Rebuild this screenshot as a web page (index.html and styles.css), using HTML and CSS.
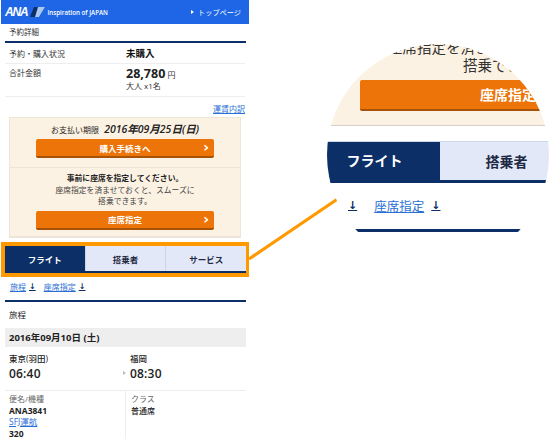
FILE: index.html
```html
<!DOCTYPE html>
<html lang="ja">
<head>
<meta charset="utf-8">
<title>予約詳細</title>
<link rel="stylesheet" href="styles.css">
</head>
<body>
<main class="phone">
  <header class="hdr">
    <div class="logo">
      <span class="ana">ANA</span>
      <svg class="tail" width="15" height="10" viewBox="0 0 15 10"><polygon points="4,0 15,0 9,10 0,10" fill="#0b2f66"/><polygon points="8,0 15,0 9,10 5,10" fill="#a9c8f2"/></svg>
      <span class="insp">Inspiration of JAPAN</span>
    </div>
    <span class="top"><i class="tri"></i>トップページ</span>
  </header>
  <h1 class="title">予約詳細</h1>
  <dl class="row r1"><dt>予約・購入状況</dt><dd class="strong">未購入</dd></dl>
  <dl class="row r2"><dt>合計金額</dt><dd><span class="price">28,780</span> <span class="yen">円</span><div class="pax">大人 x1名</div></dd></dl>
  <div class="fare"><a href="#">運賃内訳</a></div>
  <section class="box">
    <div class="pay">
      <p class="limit">お支払い期限 <b>2016年09月25日(日)</b></p>
      <a class="btn" href="#">購入手続きへ<i class="chev">›</i></a>
    </div>
    <div class="seat">
      <p class="msg"><b>事前に座席を指定してください。</b><br>座席指定を済ませておくと、スムーズに<br>搭乗できます。</p>
      <a class="btn" href="#">座席指定<i class="chev">›</i></a>
    </div>
  </section>
  <div class="hl">
    <nav class="tabs">
      <a class="tab on">フライト</a><a class="tab">搭乗者</a><a class="tab">サービス</a>
    </nav>
  </div>
  <div class="anchors"><a href="#">旅程</a><span class="arr">↓</span><a href="#">座席指定</a><span class="arr">↓</span></div>
  <h2 class="sec">旅程</h2>
  <div class="date">2016年09月10日 (土)</div>
  <div class="route">
    <div class="cell"><div class="city">東京(羽田)</div><div class="time">06:40</div></div>
    <div class="cell to"><div class="city">福岡</div><div class="time">08:30</div></div>
  </div>
  <div class="info">
    <div class="cell"><div class="cap">便名/機種</div><div class="val">ANA3841</div><a class="sfj" href="#">SFJ運航</a><div class="val">320</div></div>
    <div class="cell side"><div class="cap">クラス</div><div class="val">普通席</div></div>
  </div>
</main>

<svg class="leader" width="560" height="440" viewBox="0 0 560 440"><line x1="249" y1="259" x2="339" y2="198" stroke="#ff9900" stroke-width="3.2"/></svg>

<aside class="lens">
  <div class="l-cream">
    <p class="l-msg"><span class="l1">座席指定を済ませておくと</span><br><span class="l2">搭乗できます。</span></p>
    <a class="l-btn" href="#">座席指定</a>
  </div>
  <div class="l-tabs"><a class="l-tab on">フライト</a><a class="l-tab wide">搭乗者</a></div>
  <div class="l-links"><span class="arr">↓</span><a href="#">座席指定</a><span class="arr">↓</span></div>
  <div class="l-rule"></div>
</aside>
</body>
</html>
```
FILE: styles.css
```css
* { box-sizing: border-box; }
html, body { margin: 0; padding: 0; }
body { width: 560px; height: 440px; background: #fff; position: relative; overflow: hidden; color: #333; font-family: "Open Sans", "Noto Sans CJK JP", sans-serif; font-size: 8px; }
a { color: #2a6fd6; text-decoration: underline; }
p, h1, h2, dl, dd { margin: 0; }

.phone { width: 248px; height: 440px; margin-left: 1px; overflow: hidden; }
.hdr { height: 24px; background: #1e66e6; color: #fff; display: flex; align-items: center; justify-content: space-between; padding: 0 8px 0 4px; }
.logo { display: flex; align-items: center; }
.ana { font: italic bold 12px "Liberation Sans", sans-serif; letter-spacing: -1.2px; }
.tail { margin: 0 2px 0 3px; }
.insp { font-size: 6.2px; font-weight: 600; }
.top { font-size: 7.2px; display: flex; align-items: center; }
.tri { border-left: 3px solid #fff; border-top: 2px solid transparent; border-bottom: 2px solid transparent; margin-right: 4px; }

.title { margin: 0 3px 0 4px; border-bottom: 2px solid #0b2f66; padding-left: 4px; font-size: 7.5px; font-weight: 400; line-height: 16px; height: 19px; }
.row { display: flex; margin: 0 4px; padding-left: 4px; border-bottom: 1px solid #eee; }
.row dt { width: 117px; }
.r1 { height: 21px; align-items: center; }
.r2 { height: 33px; padding-top: 3px; }
.strong { font-size: 9.5px; font-weight: 700; color: #111; }
.price { font-size: 12.5px; font-weight: 700; color: #222; line-height: 14px; }
.yen { font-size: 8px; }
.pax { font-size: 8px; line-height: 10px; }

.fare { height: 20px; margin-right: 4px; padding-top: 6px; text-align: right; line-height: 12px; }
.box { margin: 0 8px; background: #fcf2e3; border: 1px solid #ece5d8; border-bottom-width: 2px; height: 121px; }
.pay { height: 50px; border-bottom: 1px solid #ece5d8; padding-top: 5px; }
.limit { text-align: center; font-size: 8px; line-height: 13px; color: #222; }
.limit b { font-size: 10.5px; font-style: italic; font-weight: 600; margin-left: 3px; }
.btn { display: flex; align-items: center; justify-content: center; position: relative; width: 178px; height: 19px; margin: 3px auto 0; background: #ec7408; border-bottom: 2px solid #a65207; border-radius: 2px; color: #fff; font-size: 8.5px; font-weight: 700; text-decoration: none; }
.chev { position: absolute; right: 5px; top: 0; font: 700 14px/16px "DejaVu Sans", sans-serif; }
.seat { padding-top: 5px; }
.msg { text-align: center; font-size: 7.8px; line-height: 11.5px; color: #444; }
.msg b { color: #222; font-weight: 700; }
.seat .btn { margin-top: 3px; }

.hl { margin: 4px 0 0 0; width: 248px; height: 35px; border: 4px solid #ff9900; }
.tabs { display: flex; height: 100%; background: #fff; margin-right: -1px; border-bottom: 2px solid #0b2f66; }
.tab { flex: 1; display: flex; align-items: center; justify-content: center; background: #e3e8f8; color: #1f2a44; font-size: 8.5px; font-weight: 700; text-decoration: none; border-left: 1px solid #cdd5ea; }
.tab.on { background: #0b2f66; color: #fff; border: 0; }

.anchors { margin: 2px 0 0 9px; height: 14px; display: flex; align-items: center; gap: 3px; }
.arr { color: #0b2f66; margin-right: 5px; font: 700 8px "DejaVu Sans", sans-serif; text-decoration: underline; }
.sec { margin: 7px 3px 0 4px; border-top: 2px solid #0b2f66; height: 28px; padding-left: 4px; font-size: 8.5px; font-weight: 400; line-height: 26px; color: #222; }
.date { margin: 0 3px 0 4px; height: 19px; background: #eee; padding-left: 4px; font-size: 9.5px; font-weight: 700; line-height: 19px; color: #222; }
.route { display: flex; margin: 0 3px 0 4px; height: 44px; border-bottom: 1px solid #eee; }
.info { display: flex; margin: 0 3px 0 4px; }
.cell { width: 120px; padding: 6px 0 0 4px; }
.cell.to { padding-left: 5px; position: relative; }
.cell.to::before { content: ""; position: absolute; left: -2px; top: 24px; border-left: 3px solid #bbb; border-top: 2px solid transparent; border-bottom: 2px solid transparent; }
.city { font-size: 8.5px; font-weight: 500; color: #222; line-height: 12px; }
.time { font-size: 12px; font-weight: 600; color: #222; line-height: 17px; letter-spacing: .2px; }
.side { border-left: 1px solid #eee; padding-left: 5px; }
.info .cell { padding-top: 2px; line-height: 11.5px; font-size: 8px; }
.cap { color: #666; }
.val { font-weight: 700; color: #222; font-size: 8.5px; }
.sfj { font-size: 8.5px; }
.side .val { font-weight: 500; font-size: 8px; }

.leader { position: absolute; left: 0; top: 0; pointer-events: none; }
.lens { position: absolute; left: 327px; top: 44px; width: 222px; height: 222px; border-radius: 50%; overflow: hidden; background: #fff; display: flex; flex-direction: column; align-items: stretch; }
.l-cream { height: 82px; flex: none; background: #fcf2e3; border-bottom: 1px solid #d5cfc6; padding-left: 33px; }
.l-msg { font-size: 14.5px; line-height: 18px; color: #333; width: 220px; margin-top: -5px; white-space: nowrap; }
.l1 { margin-left: 28px; }
.l2 { margin-left: 103px; }
.l-btn { display: block; width: 230px; height: 31px; margin-top: 5px; background: #ec7408; border-bottom: 2px solid #a65207; border-radius: 2px; color: #fff; font-size: 14px; font-weight: 700; line-height: 29px; padding-left: 120px; text-decoration: none; white-space: nowrap; }
.l-tabs { margin-top: 15px; height: 42px; flex: none; display: flex; border-top: 1px solid #cdd5ea; border-bottom: 3px solid #0b2f66; }
.l-tab { flex: none; width: 113px; color: #1f2a44; font-size: 14px; font-weight: 700; display: flex; align-items: center; justify-content: center; text-decoration: none; }
.l-tab.on { background: #0b2f66; color: #fff; margin-bottom: -3px; padding: 0 18px 6px 0; }
.l-tab.wide { flex: 1; background: #e3e8f8; padding-left: 24px; }
.l-links { margin: 14px 0 0 21px; display: flex; align-items: center; height: 16px; font-size: 12.5px; white-space: nowrap; }
.l-links .arr { font-size: 11px; margin-right: 17px; }
.l-links a { margin-right: 7px; }
.l-rule { margin-top: 16px; height: 3px; flex: none; background: #0b2f66; }
```
